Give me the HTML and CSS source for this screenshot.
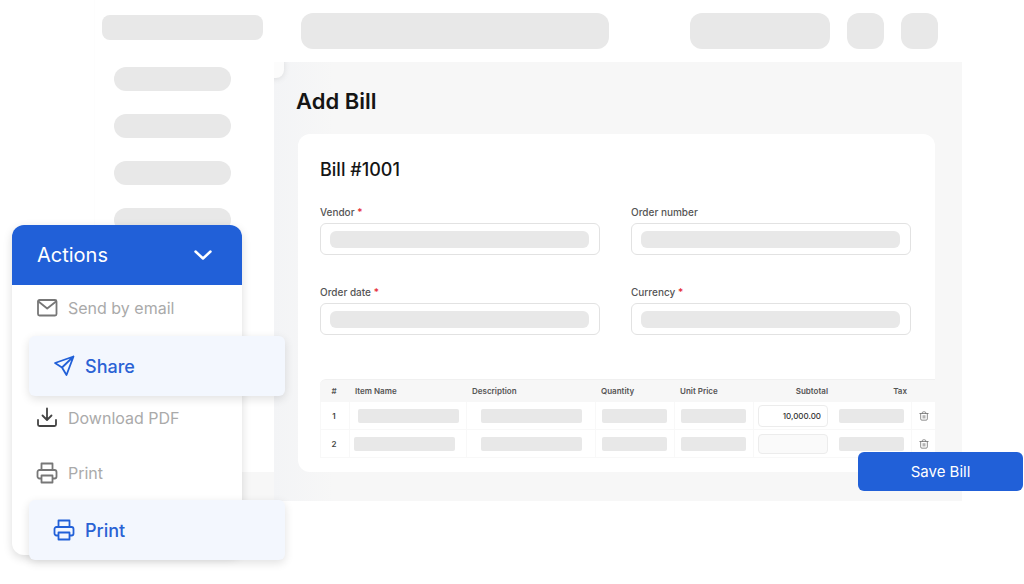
FILE: index.html
```html
<!DOCTYPE html>
<html lang="en">
<head>
  <meta charset="UTF-8" />
  <meta name="viewport" content="width=device-width, initial-scale=1.0" />
  <title>Add Bill</title>
  <link rel="stylesheet" href="styles.css">
</head>
<body>
  <div class="app">
    <aside class="sidebar">
      <div class="skeleton brand"></div>
      <div class="skeleton nav-item"></div>
      <div class="skeleton nav-item"></div>
      <div class="skeleton nav-item"></div>
      <div class="skeleton nav-item"></div>
    </aside>
    <div class="page">
      <header class="topbar">
        <div class="skeleton search"></div>
        <div class="skeleton company"></div>
        <div class="skeleton round"></div>
        <div class="skeleton round"></div>
      </header>
      <main class="content">
        <h1>Add Bill</h1>
        <form class="card" id="billForm">
          <h2>Bill #1001</h2>
          <div class="fields">
            <div class="field">
              <label for="vendor">Vendor <span class="required">*</span></label>
              <div class="box"><input class="skeleton" type="text" id="vendor" required /></div>
            </div>
            <div class="field">
              <label for="orderNumber">Order number</label>
              <div class="box"><input class="skeleton" type="text" id="orderNumber" /></div>
            </div>
            <div class="field">
              <label for="orderDate">Order date <span class="required">*</span></label>
              <div class="box"><input class="skeleton" type="text" id="orderDate" required /></div>
            </div>
            <div class="field">
              <label for="currency">Currency <span class="required">*</span></label>
              <div class="box"><input class="skeleton" type="text" id="currency" required /></div>
            </div>
          </div>
          <table class="items">
            <colgroup>
              <col class="col-no"><col class="col-item"><col><col class="col-num"><col class="col-num"><col class="col-num"><col class="col-num"><col class="col-del">
            </colgroup>
            <thead>
              <tr>
                <th class="no">#</th>
                <th>Item Name</th>
                <th>Description</th>
                <th>Quantity</th>
                <th>Unit Price</th>
                <th class="right">Subtotal</th>
                <th class="right">Tax</th>
                <th></th>
              </tr>
            </thead>
            <tbody>
              <tr>
                <td class="no">1</td>
                <td class="inset"><input class="skeleton wide" type="text" aria-label="Item Name" /></td>
                <td class="desc"><input class="skeleton wide" type="text" aria-label="Description" /></td>
                <td><input class="skeleton" type="text" aria-label="Quantity" /></td>
                <td><input class="skeleton" type="text" aria-label="Unit Price" /></td>
                <td class="total"><input type="text" value="10,000.00" aria-label="Subtotal" /></td>
                <td><input class="skeleton" type="text" aria-label="Tax" /></td>
                <td class="del">
                  <button type="button" aria-label="Delete">
                    <svg viewBox="0 0 24 24"><path d="M2 6h20M8 6V4a2 2 0 0 1 2-2h4a2 2 0 0 1 2 2v2M4 6v13a3 3 0 0 0 3 3h10a3 3 0 0 0 3-3V6M10 11v6M14 11v6" /></svg>
                  </button>
                </td>
              </tr>
              <tr>
                <td class="no">2</td>
                <td class="flush"><input class="skeleton wide" type="text" aria-label="Item Name" /></td>
                <td class="desc"><input class="skeleton wide" type="text" aria-label="Description" /></td>
                <td><input class="skeleton" type="text" aria-label="Quantity" /></td>
                <td><input class="skeleton" type="text" aria-label="Unit Price" /></td>
                <td class="total"><input class="empty" type="text" aria-label="Subtotal" /></td>
                <td><input class="skeleton" type="text" aria-label="Tax" /></td>
                <td class="del">
                  <button type="button" aria-label="Delete">
                    <svg viewBox="0 0 24 24"><path d="M2 6h20M8 6V4a2 2 0 0 1 2-2h4a2 2 0 0 1 2 2v2M4 6v13a3 3 0 0 0 3 3h10a3 3 0 0 0 3-3V6M10 11v6M14 11v6" /></svg>
                  </button>
                </td>
              </tr>
            </tbody>
          </table>
        </form>
      </main>
    </div>
    <button class="save" type="submit" form="billForm">Save Bill</button>
  </div>

  <div class="actions">
    <button class="actions-toggle" type="button">
      Actions
      <svg viewBox="0 0 18 10"><path d="M1.5 1.5L9 8.500l7.500-7" /></svg>
    </button>
    <div class="menu">
      <button class="item" type="button">
        <svg viewBox="0 0 22 22"><rect x="2" y="3" width="18.500" height="15.500" rx="1.500" /><path d="M2.500 4.500l8.700 7 8.800-7" /></svg>
        Send by email
      </button>
      <button class="item active" type="button">
        <svg viewBox="0 0 22 22"><path d="M20.500 1.500L2 8l7 4.500 4.500 7.500zM20.500 1.500L9 12.500" /></svg>
        Share
      </button>
      <button class="item download" type="button">
        <svg viewBox="0 0 22 22"><path d="M11 1.500v11M6.500 8.500l4.500 4.500 4.500-4.500M2 13v4.500a1.500 1.500 0 0 0 1.500 1.500h15a1.500 1.500 0 0 0 1.500-1.500V13" /></svg>
        Download PDF
      </button>
      <button class="item" type="button">
        <svg viewBox="0 0 22 22"><path d="M5.500 8V1.500h11V8M5.500 16.500H3.500a2 2 0 0 1-2-2V10a2 2 0 0 1 2-2h15a2 2 0 0 1 2 2v4.500a2 2 0 0 1-2 2h-2M5.500 13.500h11v7h-11z" /></svg>
        Print
      </button>
      <button class="item active" type="button">
        <svg viewBox="0 0 22 22"><path d="M5.500 8V1.500h11V8M5.500 16.500H3.500a2 2 0 0 1-2-2V10a2 2 0 0 1 2-2h15a2 2 0 0 1 2 2v4.500a2 2 0 0 1-2 2h-2M5.500 13.500h11v7h-11z" /></svg>
        Print
      </button>
    </div>
  </div>
</body>
</html>
```
FILE: styles.css
```css
:root {
  --blue: #2160d8;
  --grey: #e8e8e8;
  --page: #f7f7f7;
  --line: #f8f8f8;
}
* {
  box-sizing: border-box;
}
body {
  font-family: Inter, "Liberation Sans", sans-serif;
  margin: 0;
  background: #fff;
  color: #151515;
}
button,
input {
  font-family: inherit;
  border: none;
  margin: 0;
  padding: 0;
}
button {
  cursor: pointer;
}
svg {
  display: block;
  fill: none;
  stroke: currentColor;
  stroke-linecap: round;
  stroke-linejoin: round;
}
.skeleton {
  background: var(--grey);
}

/* app frame */
.app {
  position: relative;
  display: grid;
  grid-template-columns: 180px 1fr;
  margin: 0 62px 0 94px;
  background: var(--page);
}
.sidebar {
  background: #fff;
  padding: 15px 11px 0 7px;
  margin-bottom: 29px;
  border-left: 1px solid #fdfdfd;
}
.brand {
  height: 25px;
  border-radius: 8px;
  margin-bottom: 27px;
}
.nav-item {
  width: 117px;
  height: 24px;
  border-radius: 12px;
  margin: 0 0 23px 12px;
}
.topbar {
  display: flex;
  gap: 17px;
  padding: 13px 24px 13px 27px;
  background: #fff;
}
.topbar .skeleton {
  height: 36px;
  border-radius: 12px;
}
.search {
  width: 308px;
}
.company {
  width: 140px;
  margin-left: auto;
}
.round {
  width: 37px;
}

/* bill form */
.content {
  position: relative;
  overflow: hidden;
  padding: 24px 27px 29px 22px;
  background: linear-gradient(to right, #f3f4f6, var(--page) 60px);
}
.content::before {
  content: "";
  position: absolute;
  top: -8px;
  left: -14px;
  width: 24px;
  height: 24px;
  border-radius: 8px;
  background: #fcfcfc;
  box-shadow: 0 1px 6px rgba(0, 0, 0, 0.1);
}
h1 {
  margin: 0 0 18px;
  font-size: 22px;
  line-height: 30px;
  font-weight: 600;
}
.card {
  margin-left: 2px;
  padding: 24px 0 14px 22px;
  border-radius: 12px;
  background: #fff;
}
h2 {
  margin: 0 0 24px;
  font-size: 18px;
  line-height: 24px;
  font-weight: 500;
}
.fields {
  display: grid;
  grid-template-columns: 1fr 1fr;
  gap: 31px;
  margin-right: 24px;
}
.field label {
  display: block;
  margin-bottom: 5px;
  font-size: 10px;
  line-height: 12px;
  font-weight: 500;
  color: #555;
}
.required {
  color: #e5252f;
}
.box {
  display: flex;
  padding: 7px 10px 7px 9px;
  height: 32px;
  border: 1px solid #e2e2e2;
  border-radius: 6px;
}
.box .skeleton {
  width: 100%;
  height: 17px;
  border-radius: 6px;
}

/* line items */
.items {
  width: 100%;
  margin-top: 44px;
  table-layout: fixed;
  border-collapse: separate;
  border-spacing: 0;
}
.col-no {
  width: 30px;
}
.col-item {
  width: 117px;
}
.col-num {
  width: 79px;
}
.col-del {
  width: 23px;
}
.items th {
  height: 23px;
  padding: 0 5px;
  background: var(--page);
  border-top: 1px solid #f0f0f0;
  font-size: 8px;
  font-weight: 600;
  text-align: left;
  color: #555;
}
.items th:first-child {
  border-top-left-radius: 6px;
}
.items td {
  height: 28px;
  padding: 0 6px;
  border-right: 1px solid var(--line);
  border-bottom: 1px solid var(--line);
  font-size: 8px;
  font-weight: 600;
  color: #444;
}
.items td:first-child {
  border-left: 1px solid var(--line);
}
.items td:last-child {
  border-right: none;
}
.items th.right {
  text-align: right;
}
.items .no {
  padding: 0 2px 0 0;
  text-align: center;
}
.items input {
  display: block;
  width: 65px;
  height: 14px;
  border-radius: 2px;
}
.items .wide {
  width: 101px;
}
.items td.inset {
  padding-left: 8px;
}
.items td.flush {
  padding-left: 4px;
}
.items td.desc {
  padding-left: 14px;
}
.items td.total {
  padding: 0 5px 0 4px;
  border-right: none;
}
.items .total input {
  width: 100%;
  height: 22px;
  padding: 0 6px;
  border: 1px solid #ececec;
  border-radius: 4px;
  background: #fff;
  font-size: 8px;
  font-weight: 500;
  text-align: right;
  color: #333;
}
.items .total .empty {
  height: 20px;
  background: #fafafa;
}
.items td.del {
  padding: 0;
}
.del button {
  display: block;
  margin: 0 auto;
  background: none;
  color: #777;
}
.del svg {
  width: 10px;
  height: 10px;
  stroke-width: 2;
}
.save {
  position: absolute;
  right: -61px;
  bottom: 10px;
  width: 165px;
  height: 39px;
  border-radius: 6px;
  background: var(--blue);
  color: #fff;
  font-size: 15px;
  font-weight: 400;
}

/* actions menu, floats over the page */
.actions {
  position: absolute;
  top: 225px;
  left: 12px;
  width: 230px;
  border-radius: 12px;
  background: #fff;
  box-shadow: 0 3px 10px rgba(0, 0, 0, 0.14);
}
.actions-toggle {
  display: flex;
  align-items: center;
  justify-content: space-between;
  width: 100%;
  height: 60px;
  padding: 0 30px 0 25px;
  border-radius: 12px 12px 0 0;
  background: var(--blue);
  color: #fff;
  font-size: 20px;
  font-weight: 400;
}
.actions-toggle svg {
  width: 18px;
  height: 10px;
  stroke-width: 2.500;
}
.menu {
  display: grid;
  grid-template-rows: 51px 59px 55px 50px 60px;
  align-items: start;
  margin-bottom: -5px;
}
.item {
  display: flex;
  align-items: center;
  gap: 10px;
  height: 46px;
  padding: 0 24px;
  background: none;
  font-size: 16px;
  color: #aaa;
}
.item svg {
  width: 22px;
  height: 22px;
  stroke: #777;
  stroke-width: 1.800;
}
.item.download svg {
  stroke: #444;
}
.item.active {
  height: 60px;
  margin: 0 -43px 0 17px;
  border-radius: 6px;
  background: #f3f7fe;
  box-shadow: 0 3px 10px rgba(0, 0, 0, 0.12);
  color: #2a62d4;
  font-size: 18px;
  font-weight: 500;
}
.item.active svg {
  stroke: var(--blue);
}
```
